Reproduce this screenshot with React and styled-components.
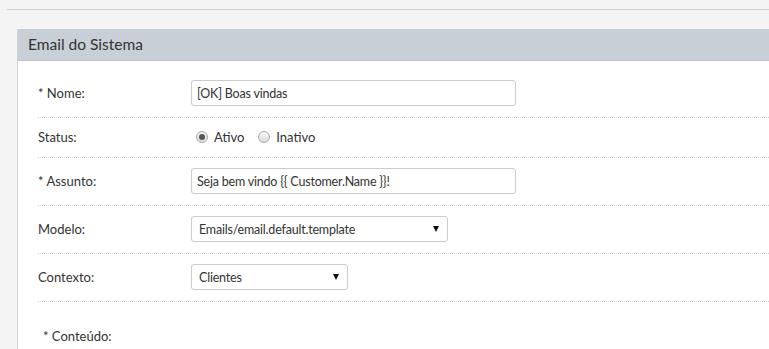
import React from "react";
import styled, { createGlobalStyle } from "styled-components";

const GlobalStyle = createGlobalStyle`
  html, body {
    margin: 0;
    padding: 0;
    background: #f4f4f4;
    font-family: Lato, "Open Sans", Arial, sans-serif;
    color: #333;
    overflow: hidden;
  }
`;

const Page = styled.div`
  padding-top: 9px;
`;

const TopRule = styled.div`
  margin-left: 7px;
  border-top: 1px solid #cfcfcf;
`;

const Panel = styled.section`
  margin: 19px 0 0 17px;
  background: #fff;
  border-left: 1px solid #d2d2d2;
  min-height: 330px;
`;

const PanelHeader = styled.h2`
  margin: 0;
  height: 31px;
  line-height: 31px;
  padding-left: 10px;
  background: #c8cfd6;
  border-bottom: 1px solid #bcc2c8;
  font-size: 15.5px;
  font-weight: 400;
  color: #333;
`;

const Form = styled.form`
  padding: 9px 0 0 20px;
`;

const Row = styled.div`
  display: grid;
  grid-template-columns: 153px 1fr;
  align-items: center;
  padding: 10px 0 11px;
  min-height: ${({ $compact }) => ($compact ? "18px" : "26px")};
  border-bottom: 1px dotted #cfcfcf;
`;

const Label = styled.label`
  font-size: 13px;
  color: #333;
`;

const TextInput = styled.input`
  box-sizing: border-box;
  width: ${({ $width }) => $width}px;
  height: 26px;
  padding: 0 5px;
  border: 1px solid #ccc;
  border-radius: 3px;
  font-family: inherit;
  font-size: 12.5px;
  letter-spacing: -0.2px;
  color: #333;
  outline: none;
`;

const SelectBox = styled.div`
  box-sizing: border-box;
  width: ${({ $width }) => $width}px;
  height: 26px;
  padding: 0 8px 0 7px;
  display: flex;
  align-items: center;
  justify-content: space-between;
  border: 1px solid #ccc;
  border-radius: 3px;
  font-size: 12.5px;
  letter-spacing: -0.2px;
  color: #333;
`;

const Arrow = styled.span`
  width: 0;
  height: 0;
  border-left: 3px solid transparent;
  border-right: 3px solid transparent;
  border-top: 6px solid #111;
`;

const RadioGroup = styled.div`
  display: flex;
  align-items: center;
  gap: 14px;
  padding-left: 5px;
`;

const RadioOption = styled.span`
  display: flex;
  align-items: center;
  gap: 6px;
  font-size: 13px;
  color: #333;
`;

const RadioDot = styled.span`
  box-sizing: border-box;
  width: 12px;
  height: 12px;
  border-radius: 50%;
  border: 1px solid #a9a9a9;
  background: linear-gradient(#f6f6f6, #dcdcdc);
  display: flex;
  align-items: center;
  justify-content: center;
  &::after {
    content: "";
    width: 6px;
    height: 6px;
    border-radius: 50%;
    background: ${({ $checked }) => ($checked ? "#555" : "transparent")};
  }
`;

const ContentLabel = styled.div`
  padding: 26px 0 0 5px;
  font-size: 13px;
  color: #333;
`;

const Radio = ({ checked, children }) => (
  <RadioOption>
    <RadioDot $checked={checked} />
    {children}
  </RadioOption>
);

const Select = ({ value, width }) => (
  <SelectBox $width={width}>
    <span>{value}</span>
    <Arrow />
  </SelectBox>
);

export default function App() {
  return (
    <Page>
      <GlobalStyle />
      <TopRule />
      <Panel>
        <PanelHeader>Email do Sistema</PanelHeader>
        <Form onSubmit={(e) => e.preventDefault()}>
          <Row>
            <Label>* Nome:</Label>
            <TextInput $width={325} defaultValue="[OK] Boas vindas" />
          </Row>
          <Row $compact>
            <Label>Status:</Label>
            <RadioGroup>
              <Radio checked>Ativo</Radio>
              <Radio>Inativo</Radio>
            </RadioGroup>
          </Row>
          <Row>
            <Label>* Assunto:</Label>
            <TextInput
              $width={325}
              defaultValue="Seja bem vindo {{ Customer.Name }}!"
            />
          </Row>
          <Row>
            <Label>Modelo:</Label>
            <Select width={257} value="Emails/email.default.template" />
          </Row>
          <Row>
            <Label>Contexto:</Label>
            <Select width={157} value="Clientes" />
          </Row>
          <ContentLabel>* Conteúdo:</ContentLabel>
        </Form>
      </Panel>
    </Page>
  );
}
